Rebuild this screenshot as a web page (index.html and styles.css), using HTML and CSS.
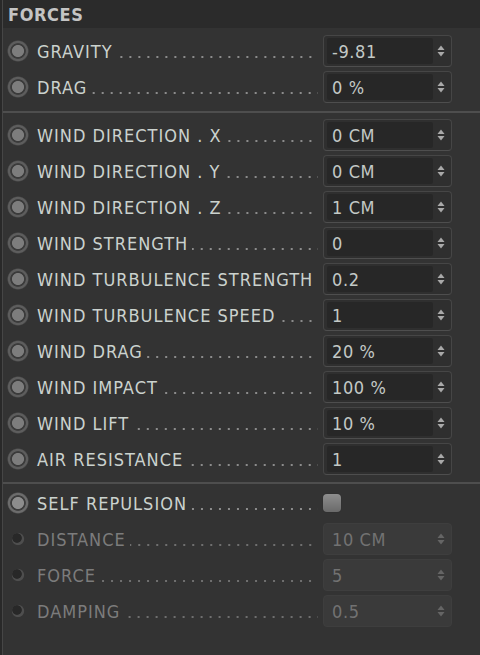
FILE: index.html
```html
<!DOCTYPE html>
<html>
<head>
<meta charset="utf-8">
<link rel="stylesheet" href="styles.css">
</head>
<body>
<div class="panel">
  <div class="header">FORCES</div>

  <div class="group first">
    <div class="row"><span class="radio"></span><span class="label"><span class="text">GRAVITY</span><span class="leader"></span></span><div class="field"><span class="value">-9.81</span><span class="spin"><svg width="8" height="14" viewBox="0 0 8 14"><polygon points="0.5,6 4,1.5 7.5,6"/><polygon points="0.5,8 4,12.5 7.5,8"/></svg></span></div></div>
    <div class="row"><span class="radio"></span><span class="label"><span class="text">DRAG</span><span class="leader"></span></span><div class="field"><span class="value">0 %</span><span class="spin"><svg width="8" height="14" viewBox="0 0 8 14"><polygon points="0.5,6 4,1.5 7.5,6"/><polygon points="0.5,8 4,12.5 7.5,8"/></svg></span></div></div>
  </div>

  <div class="sep"></div>

  <div class="group second">
    <div class="row"><span class="radio"></span><span class="label"><span class="text">WIND DIRECTION . X</span><span class="leader"></span></span><div class="field"><span class="value">0 CM</span><span class="spin"><svg width="8" height="14" viewBox="0 0 8 14"><polygon points="0.5,6 4,1.5 7.5,6"/><polygon points="0.5,8 4,12.5 7.5,8"/></svg></span></div></div>
    <div class="row"><span class="radio"></span><span class="label"><span class="text">WIND DIRECTION . Y</span><span class="leader"></span></span><div class="field"><span class="value">0 CM</span><span class="spin"><svg width="8" height="14" viewBox="0 0 8 14"><polygon points="0.5,6 4,1.5 7.5,6"/><polygon points="0.5,8 4,12.5 7.5,8"/></svg></span></div></div>
    <div class="row"><span class="radio"></span><span class="label"><span class="text">WIND DIRECTION . Z</span><span class="leader"></span></span><div class="field"><span class="value">1 CM</span><span class="spin"><svg width="8" height="14" viewBox="0 0 8 14"><polygon points="0.5,6 4,1.5 7.5,6"/><polygon points="0.5,8 4,12.5 7.5,8"/></svg></span></div></div>
    <div class="row"><span class="radio"></span><span class="label"><span class="text">WIND STRENGTH</span><span class="leader"></span></span><div class="field"><span class="value">0</span><span class="spin"><svg width="8" height="14" viewBox="0 0 8 14"><polygon points="0.5,6 4,1.5 7.5,6"/><polygon points="0.5,8 4,12.5 7.5,8"/></svg></span></div></div>
    <div class="row"><span class="radio"></span><span class="label"><span class="text">WIND TURBULENCE STRENGTH</span><span class="leader"></span></span><div class="field"><span class="value">0.2</span><span class="spin"><svg width="8" height="14" viewBox="0 0 8 14"><polygon points="0.5,6 4,1.5 7.5,6"/><polygon points="0.5,8 4,12.5 7.5,8"/></svg></span></div></div>
    <div class="row"><span class="radio"></span><span class="label"><span class="text">WIND TURBULENCE SPEED</span><span class="leader"></span></span><div class="field"><span class="value">1</span><span class="spin"><svg width="8" height="14" viewBox="0 0 8 14"><polygon points="0.5,6 4,1.5 7.5,6"/><polygon points="0.5,8 4,12.5 7.5,8"/></svg></span></div></div>
    <div class="row"><span class="radio"></span><span class="label"><span class="text">WIND DRAG</span><span class="leader"></span></span><div class="field"><span class="value">20 %</span><span class="spin"><svg width="8" height="14" viewBox="0 0 8 14"><polygon points="0.5,6 4,1.5 7.5,6"/><polygon points="0.5,8 4,12.5 7.5,8"/></svg></span></div></div>
    <div class="row"><span class="radio"></span><span class="label"><span class="text">WIND IMPACT</span><span class="leader"></span></span><div class="field"><span class="value">100 %</span><span class="spin"><svg width="8" height="14" viewBox="0 0 8 14"><polygon points="0.5,6 4,1.5 7.5,6"/><polygon points="0.5,8 4,12.5 7.5,8"/></svg></span></div></div>
    <div class="row"><span class="radio"></span><span class="label"><span class="text">WIND LIFT</span><span class="leader"></span></span><div class="field"><span class="value">10 %</span><span class="spin"><svg width="8" height="14" viewBox="0 0 8 14"><polygon points="0.5,6 4,1.5 7.5,6"/><polygon points="0.5,8 4,12.5 7.5,8"/></svg></span></div></div>
    <div class="row"><span class="radio"></span><span class="label"><span class="text">AIR RESISTANCE</span><span class="leader"></span></span><div class="field"><span class="value">1</span><span class="spin"><svg width="8" height="14" viewBox="0 0 8 14"><polygon points="0.5,6 4,1.5 7.5,6"/><polygon points="0.5,8 4,12.5 7.5,8"/></svg></span></div></div>
  </div>

  <div class="sep sep2"></div>

  <div class="group third">
    <div class="row"><span class="radio on"></span><span class="label"><span class="text">SELF REPULSION</span><span class="leader"></span></span><div class="checkcell"><span class="checkbox"></span></div></div>
    <div class="row disabled"><span class="radio-off"></span><span class="label"><span class="text">DISTANCE</span><span class="leader"></span></span><div class="field"><span class="value">10 CM</span><span class="spin"><svg width="8" height="14" viewBox="0 0 8 14"><polygon points="0.5,6 4,1.5 7.5,6"/><polygon points="0.5,8 4,12.5 7.5,8"/></svg></span></div></div>
    <div class="row disabled"><span class="radio-off"></span><span class="label"><span class="text">FORCE</span><span class="leader"></span></span><div class="field"><span class="value">5</span><span class="spin"><svg width="8" height="14" viewBox="0 0 8 14"><polygon points="0.5,6 4,1.5 7.5,6"/><polygon points="0.5,8 4,12.5 7.5,8"/></svg></span></div></div>
    <div class="row disabled"><span class="radio-off"></span><span class="label"><span class="text">DAMPING</span><span class="leader"></span></span><div class="field"><span class="value">0.5</span><span class="spin"><svg width="8" height="14" viewBox="0 0 8 14"><polygon points="0.5,6 4,1.5 7.5,6"/><polygon points="0.5,8 4,12.5 7.5,8"/></svg></span></div></div>
  </div>
</div>
</body>
</html>
```

FILE: styles.css
```css
html, body {
  margin: 0;
  padding: 0;
  background: #292929;
  height: 100%;
}

body {
  font-family: "DejaVu Sans Condensed", "DejaVu Sans", sans-serif;
  font-stretch: condensed;
  overflow: hidden;
}

.panel {
  margin-left: 2px;
  border-left: 1px solid #464646;
  background: #333333;
  min-height: 655px;
}

.header {
  height: 28px;
  background: #2b2b2b;
  color: #c4c4c4;
  font-weight: bold;
  font-size: 18px;
  letter-spacing: 0.6px;
  line-height: 30px;
  padding-left: 5px;
}

.group.first {
  padding-top: 5px;
}

.group.second {
  padding-top: 4px;
}

.sep {
  margin-top: 6px;
  height: 2px;
  background: #4e4e4e;
}

.sep.sep2 {
  margin-top: 5px;
}

.group.third {
  padding-top: 1px;
}

.row {
  height: 36px;
  display: flex;
  align-items: center;
  padding-left: 4px;
  padding-right: 28px;
}

.radio {
  flex: none;
  width: 22px;
  height: 22px;
  border-radius: 50%;
  background: radial-gradient(circle, #7d7d7d 0 5.6px, #3b3b3b 6.4px 7.4px, #5d5d5d 8.2px 9.6px, rgba(80,80,80,0) 11px);
}

.radio.on {
  background: radial-gradient(circle, #8d8d8d 0 5.6px, #3d3d3d 6.4px 7.4px, #6c6c6c 8.2px 9.6px, rgba(90,90,90,0) 11px);
}

.radio-off {
  flex: none;
  width: 22px;
  height: 22px;
  border-radius: 50%;
  background:
    radial-gradient(circle at 10px 10px, #282828 0 4.4px, rgba(40,40,40,0) 5.2px),
    radial-gradient(circle at 11px 11px, #4e4e4e 0 5.6px, rgba(70,70,70,0) 6.6px);
}

.label {
  flex: 1;
  min-width: 0;
  display: flex;
  align-items: baseline;
  margin-left: 8px;
  margin-right: 5px;
  color: #cbd2ce;
  font-size: 18px;
  letter-spacing: 1px;
  white-space: nowrap;
}

.text {
  flex: none;
}

.leader {
  flex: 1;
  height: 2px;
  margin-left: 4px;
  margin-bottom: 2px;
  background-image: linear-gradient(to right, #8c8c8c 2px, transparent 2px);
  background-size: 9px 2px;
  background-repeat: repeat-x;
  background-position: right bottom;
}

.field {
  flex: none;
  width: 129px;
  height: 32px;
  box-sizing: border-box;
  border: 1px solid #464646;
  border-bottom-color: #4e4e4e;
  border-radius: 4px;
  background: #2f2f2f;
  display: flex;
  align-items: stretch;
  padding: 2px 2px 2px 3px;
}

.value {
  flex: 1;
  background: #272727;
  color: #c3c9c6;
  font-size: 18px;
  letter-spacing: 0.6px;
  line-height: 27px;
  padding-left: 5px;
  border-radius: 2px;
}

.spin {
  flex: none;
  width: 16px;
  display: flex;
  align-items: center;
  justify-content: center;
}

.spin svg {
  fill: #a9a9a9;
  display: block;
}

.checkcell {
  flex: none;
  width: 129px;
  height: 32px;
  display: flex;
  align-items: center;
}

.checkbox {
  width: 18px;
  height: 18px;
  border-radius: 4px;
  background: linear-gradient(#8e8e8e, #6a6a6a);
  box-shadow: 0 0 1px rgba(0,0,0,0.4);
}

.row.disabled .label {
  color: #7c7c7c;
}

.row.disabled .leader {
  background-image: linear-gradient(to right, #6f6f6f 2px, transparent 2px);
}

.row.disabled .field {
  background: #3a3a3a;
  border-color: #3e3e3e;
}

.row.disabled .value {
  background: transparent;
  color: #727272;
}

.row.disabled .spin svg {
  fill: #656565;
}
```
